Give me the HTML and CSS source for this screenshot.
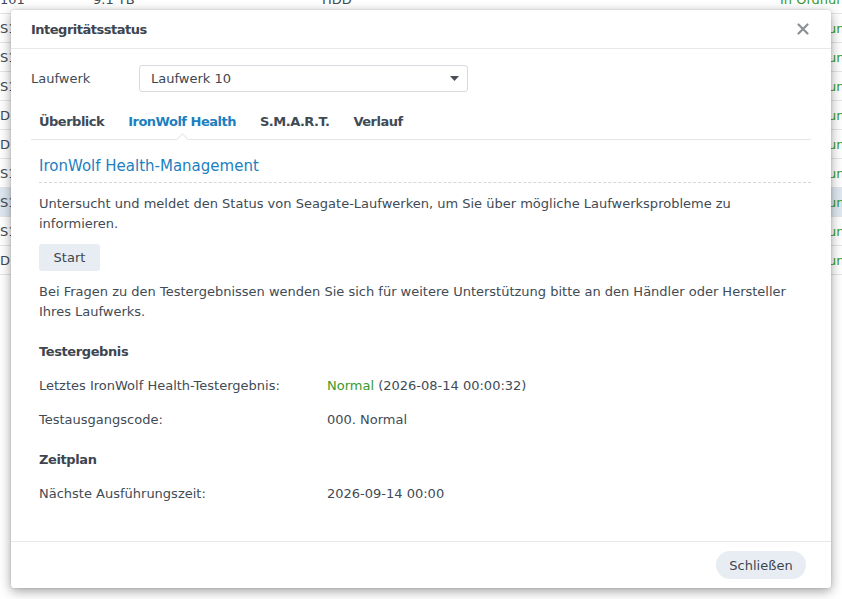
FILE: index.html
```html
<!DOCTYPE html>
<html lang="de">
<head>
<meta charset="utf-8">
<title>Integritätsstatus</title>
<link rel="stylesheet" href="styles.css">
</head>
<body>
<div class="bg">
  <div class="bg-row"><span class="c1">101</span><span class="c2">9.1 TB</span><span class="c3">HDD</span><span class="c4">In Ordnung</span></div>
  <div class="bg-row"><span class="c1">S1</span><span class="c4">In Ordnung</span></div>
  <div class="bg-row"><span class="c1">S1</span><span class="c4">In Ordnung</span></div>
  <div class="bg-row"><span class="c1">S1</span><span class="c4">In Ordnung</span></div>
  <div class="bg-row"><span class="c1">D1</span><span class="c4">In Ordnung</span></div>
  <div class="bg-row"><span class="c1">D1</span><span class="c4">In Ordnung</span></div>
  <div class="bg-row"><span class="c1">S1</span><span class="c4">In Ordnung</span></div>
  <div class="bg-row sel"><span class="c1">S1</span><span class="c4">In Ordnung</span></div>
  <div class="bg-row"><span class="c1">S1</span><span class="c4">In Ordnung</span></div>
  <div class="bg-row"><span class="c1">D1</span><span class="c4">In Ordnung</span></div>
</div>

<div class="dialog">
  <div class="dlg-head">
    <span class="dlg-title">Integritätsstatus</span>
    <svg class="close" width="12" height="12" viewBox="0 0 12 12"><path d="M1.5 1.5 L10.5 10.5 M10.5 1.5 L1.5 10.5" stroke="#8b9096" stroke-width="2.2" stroke-linecap="round" fill="none"/></svg>
  </div>
  <div class="dlg-body">
    <div class="drive-row">
      <span class="drive-label">Laufwerk</span>
      <div class="select"><span>Laufwerk 10</span><svg width="9" height="5" viewBox="0 0 9 5"><path d="M0 0 H9 L4.5 5 Z" fill="#4a4f55"/></svg></div>
    </div>
    <div class="tabs">
      <span class="tab">Überblick</span>
      <span class="tab active">IronWolf Health</span>
      <span class="tab">S.M.A.R.T.</span>
      <span class="tab">Verlauf</span>
    </div>
    <div class="content">
      <div class="section-title">IronWolf Health-Management</div>
      <p class="text first">Untersucht und meldet den Status von Seagate-Laufwerken, um Sie über mögliche Laufwerksprobleme zu informieren.</p>
      <button class="btn-start">Start</button>
      <p class="text second">Bei Fragen zu den Testergebnissen wenden Sie sich für weitere Unterstützung bitte an den Händler oder Hersteller Ihres Laufwerks.</p>
      <div class="group-title">Testergebnis</div>
      <div class="kv"><span class="k">Letztes IronWolf Health-Testergebnis:</span><span class="v"><span class="ok">Normal</span> (2026-08-14 00:00:32)</span></div>
      <div class="kv"><span class="k">Testausgangscode:</span><span class="v">000. Normal</span></div>
      <div class="group-title">Zeitplan</div>
      <div class="kv"><span class="k">Nächste Ausführungszeit:</span><span class="v">2026-09-14 00:00</span></div>
    </div>
  </div>
  <div class="dlg-foot">
    <button class="btn-close">Schließen</button>
  </div>
</div>
</body>
</html>
```
FILE: styles.css
```css
html, body {
  margin: 0;
  padding: 0;
}
body {
  width: 842px;
  height: 599px;
  overflow: hidden;
  position: relative;
  background: #ffffff;
  font-family: "DejaVu Sans", Verdana, sans-serif;
  font-size: 13px;
  color: #414b55;
}

/* background grid */
.bg {
  margin-top: -15px;
}
.bg-row {
  height: 28px;
  border-bottom: 1px solid #e3e6e9;
  display: flex;
  align-items: center;
  white-space: nowrap;
}
.bg-row.sel {
  background: #dfe8f2;
}
.bg-row .c1 { width: 93px; }
.bg-row .c2 { width: 229px; }
.bg-row .c3 { width: 458px; }
.bg-row .c4 { margin-left: auto; width: 62px; color: #3a9a2a; }

/* dialog */
.dialog {
  position: absolute;
  left: 11px;
  top: 10px;
  width: 820px;
  height: 578px;
  background: #fff;
  border-radius: 3px;
  box-shadow: 0 3px 12px rgba(0, 0, 0, 0.38), 0 0 2px rgba(0, 0, 0, 0.15);
  display: flex;
  flex-direction: column;
}
.dlg-head {
  height: 38px;
  border-bottom: 1px solid #e6e8ea;
  display: flex;
  align-items: center;
  justify-content: space-between;
  padding: 0 22px 0 20px;
}
.dlg-title {
  font-weight: bold;
  color: #3d4650;
  letter-spacing: -0.5px;
}
.close { display: block; }

.dlg-body {
  flex: 1;
  padding: 0 20px;
}
.drive-row {
  display: flex;
  align-items: center;
  margin-top: 16px;
}
.drive-label {
  width: 108px;
}
.select {
  width: 329px;
  height: 27px;
  box-sizing: border-box;
  border: 1px solid #d7dbdf;
  border-radius: 3px;
  display: flex;
  align-items: center;
  justify-content: space-between;
  padding: 0 8px 0 11px;
  color: #3d4650;
}

.tabs {
  margin-top: 12px;
  border-bottom: 1px solid #e3e6e9;
  display: flex;
  align-items: center;
  gap: 24px;
  padding-left: 8px;
  box-sizing: border-box;
  height: 36px;
}
.tab {
  font-weight: bold;
  letter-spacing: -0.5px;
  color: #404a54;
  position: relative;
  height: 35px;
  line-height: 35px;
}
.tab.active {
  color: #1d7fbf;
}
.tab.active::after {
  content: "";
  position: absolute;
  left: 50%;
  bottom: -5px;
  width: 8px;
  height: 8px;
  margin-left: -4px;
  background: #fff;
  border-top: 1px solid #e3e6e9;
  border-left: 1px solid #e3e6e9;
  transform: rotate(45deg);
}

.content {
  padding: 0 0 0 8px;
}
.section-title {
  margin-top: 16px;
  font-size: 15px;
  line-height: 20px;
  color: #1d7fbf;
  padding-bottom: 6px;
  border-bottom: 1px dashed #d4d8dc;
}
.text {
  margin: 11px 0 0 0;
  line-height: 20px;
}
.btn-start {
  display: block;
  margin-top: 10px;
  width: 61px;
  height: 27px;
  border: none;
  border-radius: 3px;
  background: #e8edf3;
  font-family: inherit;
  font-size: 13px;
  color: #3d4650;
  padding: 0;
}
.group-title {
  margin-top: 20px;
  font-weight: bold;
  letter-spacing: -0.4px;
  line-height: 20px;
  color: #3d4650;
}
.kv {
  margin-top: 14px;
  line-height: 20px;
  display: flex;
}
.kv .k { width: 288px; }
.ok { color: #3a9a2a; }

.dlg-foot {
  height: 46px;
  border-top: 1px solid #e6e8ea;
  display: flex;
  align-items: center;
  justify-content: flex-end;
  padding-right: 25px;
}
.btn-close {
  width: 90px;
  height: 28px;
  border: none;
  border-radius: 14px;
  background: #e8edf3;
  font-family: inherit;
  font-size: 13px;
  color: #3d4650;
  padding: 0;
}
```
